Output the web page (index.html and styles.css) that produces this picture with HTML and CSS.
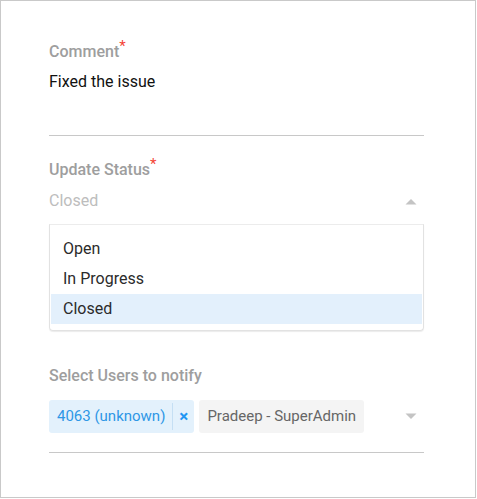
FILE: index.html
```html
<!DOCTYPE html>
<html>
<head>
<meta charset="utf-8">
<link rel="stylesheet" href="styles.css">
</head>
<body>
<div class="frame">
  <div class="form">
    <div class="field field-comment">
      <div class="label">Comment<span class="req">*</span></div>
      <div class="textarea">Fixed the issue</div>
    </div>
    <div class="field field-status">
      <div class="label">Update Status<span class="req">*</span></div>
      <div class="select">
        <span class="placeholder">Closed</span>
        <svg class="arrow" width="12" height="7" viewBox="0 0 12 7"><polygon points="0.5,6.5 6,1 11.5,6.5" fill="#c4c4c4"/></svg>
      </div>
      <ul class="menu">
        <li class="opt">Open</li>
        <li class="opt">In Progress</li>
        <li class="opt opt-active">Closed</li>
      </ul>
    </div>
    <div class="field field-users">
      <div class="label">Select Users to notify</div>
      <div class="multi">
        <div class="chips">
          <span class="chip chip-blue"><span class="chip-text">4063 (unknown)</span><span class="chip-x">×</span></span>
          <span class="chip chip-gray"><span class="chip-text">Pradeep - SuperAdmin</span></span>
        </div>
        <svg class="arrow" width="12" height="7" viewBox="0 0 12 7"><polygon points="0.5,0.5 11.5,0.5 6,6" fill="#c4c4c4"/></svg>
      </div>
    </div>
  </div>
</div>
</body>
</html>
```
FILE: styles.css
```css
* { box-sizing: border-box; }
html, body { margin: 0; padding: 0; background: #fff; }
body { font-family: Roboto, "Noto Sans", sans-serif; }

.frame {
  width: 476px;
  height: 498px;
  border: 1px solid #c9c9c9;
  background: #fff;
}
.form {
  padding: 41px 51px 0 48px;
}
.label {
  font-size: 16px;
  line-height: 20px;
  font-weight: 500;
  color: #9e9e9e;
}
.req {
  color: #f44336;
  font-size: 15px;
  font-weight: 400;
  vertical-align: 6px;
  line-height: 0;
}
.textarea {
  margin-top: 10px;
  height: 64px;
  font-size: 16px;
  line-height: 20px;
  color: #111;
  border-bottom: 1px solid #c8c8c8;
}
.field-status { margin-top: 24px; }
.select {
  margin-top: 11px;
  display: flex;
  align-items: center;
  justify-content: space-between;
  height: 20px;
  font-size: 16px;
  line-height: 20px;
}
.placeholder { color: #bdbdbd; }
.arrow { margin-right: 7px; display: block; }
.menu {
  list-style: none;
  margin: 13px 0 0 0;
  padding: 9px 1px 6px 1px;
  border: 1px solid #e2e2e2;
  border-top-color: #ececec;
  border-radius: 0 0 4px 4px;
  box-shadow: 0 1px 1px rgba(0,0,0,0.08);
}
.opt {
  height: 30px;
  line-height: 30px;
  padding-left: 12px;
  font-size: 16px;
  font-weight: 400;
  color: #2b2b2b;
}
.opt-active { background: #e3f0fc; }
.field-users { margin-top: 35px; }
.multi {
  margin-top: 14px;
  display: flex;
  align-items: center;
  justify-content: space-between;
  padding-bottom: 19px;
  border-bottom: 1px solid #c8c8c8;
}
.chips { display: flex; gap: 5px; }
.chip {
  display: flex;
  align-items: center;
  height: 33px;
  border-radius: 3px;
  font-size: 15px;
  line-height: 33px;
}
.chip-blue { background: #e3f1fc; color: #2e97e6; padding-left: 8px; }
.chip-gray { background: #f4f4f4; color: #666; padding: 0 8px; }
.chip-x {
  border-left: 1px solid #c5dff4;
  height: 27px;
  line-height: 27px;
  margin-left: 7px;
  padding: 0 6px 0 6px;
  font-weight: 700;
  font-size: 17px;
  color: #2196f3;
}
```
